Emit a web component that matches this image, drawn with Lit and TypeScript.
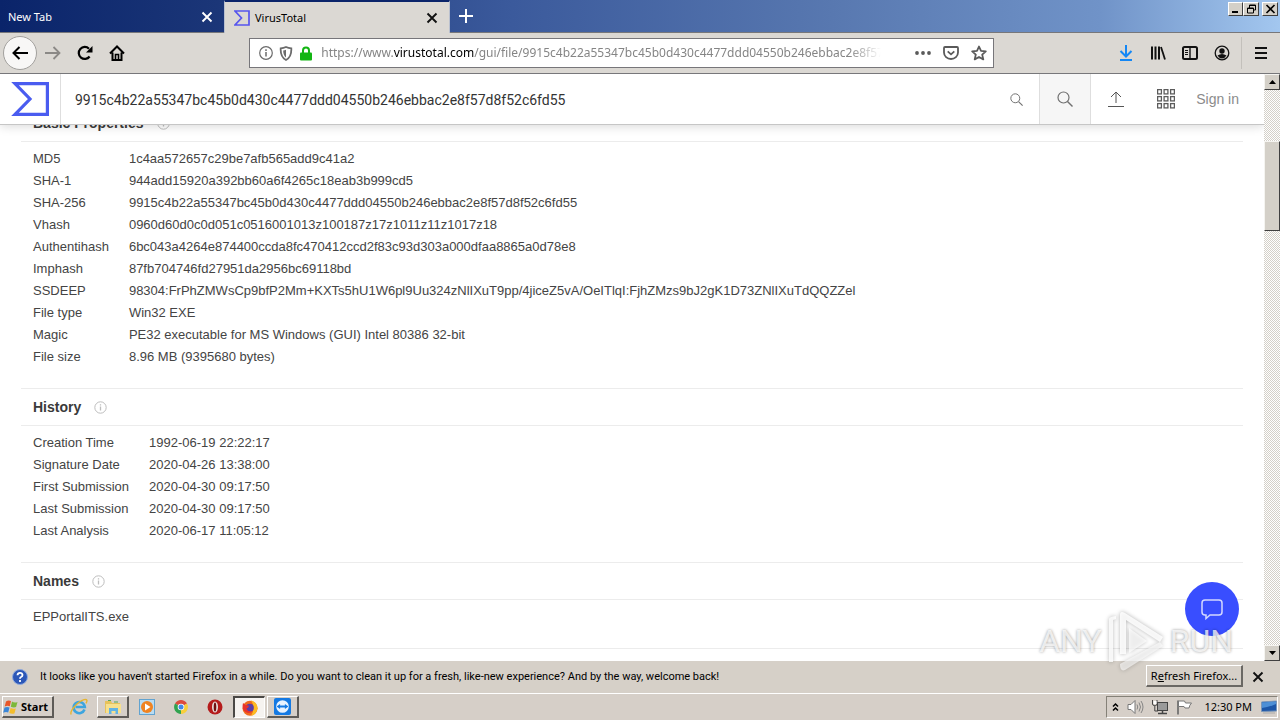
import { LitElement, html, css, svg } from "lit";
import { customElement } from "lit/decorators.js";

type Row = [string, string];

const BASIC: Row[] = [
  ["MD5", "1c4aa572657c29be7afb565add9c41a2"],
  ["SHA-1", "944add15920a392bb60a6f4265c18eab3b999cd5"],
  ["SHA-256", "9915c4b22a55347bc45b0d430c4477ddd04550b246ebbac2e8f57d8f52c6fd55"],
  ["Vhash", "0960d60d0c0d051c0516001013z100187z17z1011z11z1017z18"],
  ["Authentihash", "6bc043a4264e874400ccda8fc470412ccd2f83c93d303a000dfaa8865a0d78e8"],
  ["Imphash", "87fb704746fd27951da2956bc69118bd"],
  ["SSDEEP", "98304:FrPhZMWsCp9bfP2Mm+KXTs5hU1W6pl9Uu324zNlIXuT9pp/4jiceZ5vA/OeITlqI:FjhZMzs9bJ2gK1D73ZNlIXuTdQQZZel"],
  ["File type", "Win32 EXE"],
  ["Magic", "PE32 executable for MS Windows (GUI) Intel 80386 32-bit"],
  ["File size", "8.96 MB (9395680 bytes)"],
];

const HISTORY: Row[] = [
  ["Creation Time", "1992-06-19 22:22:17"],
  ["Signature Date", "2020-04-26 13:38:00"],
  ["First Submission", "2020-04-30 09:17:50"],
  ["Last Submission", "2020-04-30 09:17:50"],
  ["Last Analysis", "2020-06-17 11:05:12"],
];

const icon = (w: number, h: number, body: unknown) =>
  html`<svg width=${w} height=${h} viewBox="0 0 ${w} ${h}" fill="none" aria-hidden="true">${body}</svg>`;

const cross = (color: string) =>
  icon(12, 12, svg`<path d="M1.5 1.5l9 9M10.5 1.5l-9 9" stroke=${color} stroke-width="1.9"/>`);

const info = icon(13, 13, svg`<circle cx="6.5" cy="6.5" r="5.7" stroke="#bdbdbd"/><path d="M6.5 5.6v4M6.5 3.2v1.3" stroke="#bdbdbd" stroke-width="1.3"/>`);

const magnifier = (n: number) =>
  html`<svg width=${n} height=${n} viewBox="0 0 16 16" fill="none" aria-hidden="true"><circle cx="6.5" cy="6.5" r="5.5" stroke="#707070" stroke-width="1.2"/><path d="M10.5 10.5l5 5" stroke="#707070" stroke-width="1.400"/></svg>`;

@customElement("browser-tabs")
export class BrowserTabs extends LitElement {
  static styles = css`
    :host { display: flex; height: 33px; box-sizing: border-box; border-bottom: 1px solid #77777a; font: 11px/16px "Noto Sans", sans-serif;
      background: linear-gradient(90deg, #0a246a 0%, #1b3678 17%, #3b5a9c 40%, #5878b0 65%, #7093c8 86%, #a3c7ef 100%); }
    button { border: 0; padding: 0; background: none; display: grid; place-items: center; font: inherit; }
    .tab { display: flex; align-items: center; width: 224px; box-sizing: border-box; padding: 2px 11px 0 8px; color: #fff; }
    .active { background: #dbd8d3; color: #000; width: 226px; margin-bottom: -1px; border: solid #b9c0cf; border-width: 2px 1px 0; border-top-color: #0a246a; padding: 0 11px 0 9px; }
    .name { flex: 1; }
    .fav { display: flex; margin-right: 5px; }
    .add { width: 32px; }
    .win { display: flex; margin: 2px 2px 0 auto; }
    .win button { width: 15px; height: 14px; background: #d4d0c8; border: 1px solid; border-color: #fff #404040 #404040 #fff; }
    .win .close { margin-left: 3px; width: 16px; }
    .win .restore { width: 16px; }
  `;
  render() {
    return html`
      <div class="tab"><span class="name">New Tab</span><button aria-label="Close New Tab">${cross("#fff")}</button></div>
      <div class="tab active">
        <span class="fav">${icon(16, 16, svg`<path d="M1 1h14v14H1l6.5-7z" stroke="#5755ee" stroke-width="1.7"/>`)}</span>
        <span class="name">VirusTotal</span><button aria-label="Close VirusTotal">${cross("#111")}</button>
      </div>
      <button class="add" aria-label="New tab">${icon(14, 14, svg`<path d="M7 0v14M0 7h14" stroke="#fff" stroke-width="2"/>`)}</button>
      <div class="win">
        <button aria-label="Minimize">${icon(11, 10, svg`<path d="M2 8h6" stroke="#000" stroke-width="2"/>`)}</button>
        <button class="restore" aria-label="Restore">${icon(11, 10, svg`<path d="M3.5 4V1h6v5h-2M1.5 4h6v5h-6z" stroke="#000"/><path d="M3 1.5h7M1 4.5h7" stroke="#000"/>`)}</button>
        <button class="close" aria-label="Close">${icon(11, 10, svg`<path d="M1.5 1l8 8M9.5 1l-8 8" stroke="#000" stroke-width="1.6"/>`)}</button>
      </div>`;
  }
}

@customElement("browser-toolbar")
export class BrowserToolbar extends LitElement {
  static styles = css`
    :host { display: flex; align-items: center; height: 41px; box-sizing: border-box; background: #dbd8d3; border-bottom: 1px solid #77777a; padding: 0 3px; font: 12px/18px "Noto Sans", sans-serif; }
    button { border: 0; padding: 0; background: none; width: 32px; height: 32px; display: grid; place-items: center; flex: none; }
    .back { width: 34px; height: 34px; box-sizing: border-box; border: 1px solid #a2a09d; border-radius: 50%; background: #f8f7f6; }
    .spring { flex: 3 1 0; }
    .url { display: flex; align-items: center; flex: 19 1 0; min-width: 0; height: 30px; box-sizing: border-box; background: #fff; border: 1px solid #77767a; padding: 0 0 0 6px; }
    .url button { width: 20px; height: 28px; }
    .url .act { width: 28px; }
    .address { flex: 1; min-width: 0; overflow: hidden; white-space: nowrap; color: #858585; margin: 0 28px 0 5px; outline: 0;
      -webkit-mask-image: linear-gradient(270deg, transparent, #000 32px); mask-image: linear-gradient(270deg, transparent, #000 32px); }
    .host { color: #000; }
    .sep { width: 1px; height: 32px; background: #c3c0bb; margin: 0 3px; }
  `;
  render() {
    return html`
      <button class="back" aria-label="Back">${icon(16, 14, svg`<path d="M16 7H1.5M7.5 1L1.5 7l6 6" stroke="#000" stroke-width="2"/>`)}</button>
      <button aria-label="Forward">${icon(16, 14, svg`<path d="M0 7h14.5M8.500 1l6 6-6 6" stroke="#8b8986" stroke-width="1.8"/>`)}</button>
      <button aria-label="Reload">${icon(16, 16, svg`<path d="M12.600 11.500A6 6 0 1 1 12 3.700" stroke="#000" stroke-width="2.200"/><path d="M15.500 1v6.500H9z" fill="#000"/>`)}</button>
      <button aria-label="Home">${icon(16, 16, svg`<path d="M1 8.500L8 1.500l7 7M3.500 7.500V15h9V7.500" stroke="#000" stroke-width="2"/><path d="M6.500 15V9.500h3V15" stroke="#000" stroke-width="1.600"/>`)}</button>
      <span class="spring"></span>
      <div class="url">
        <button aria-label="Site information">${icon(14, 14, svg`<circle cx="7" cy="7" r="6.300" stroke="#6b6b6b" stroke-width="1.200"/><path d="M7 6v4.500M7 3.300v1.600" stroke="#6b6b6b" stroke-width="1.500"/>`)}</button>
        <button aria-label="Tracking protection">${icon(14, 15, svg`<path d="M7 1c2 .9 3.700 1.200 5.300 1.300C12.600 8 11 12 7 14 3 12 1.400 8 1.700 2.300 3.300 2.200 5 1.900 7 1z" stroke="#6b6b6b" stroke-width="1.800"/><path d="M7 3.800v7.600C5 10 4.200 7.500 4.200 4.500 5.200 4.400 6.200 4.200 7 3.800z" fill="#6b6b6b"/>`)}</button>
        <button aria-label="Connection secure">${icon(12, 15, svg`<path d="M3 7V4.500a3 3 0 0 1 6 0V7" stroke="#12b512" stroke-width="2"/><rect y="6.500" width="12" height="8" rx="1" fill="#12b512"/>`)}</button>
        <div class="address" role="textbox" contenteditable="true" aria-label="Address">https://www.<span class="host">virustotal.com</span>/gui/file/9915c4b22a55347bc45b0d430c4477ddd04550b246ebbac2e8f57d8f52c6fd55</div>
        <button class="act" aria-label="Page actions">${icon(16, 4, svg`<circle cx="2" cy="2" r="1.900" fill="#5a5a5a"/><circle cx="8" cy="2" r="1.900" fill="#5a5a5a"/><circle cx="14" cy="2" r="1.900" fill="#5a5a5a"/>`)}</button>
        <button class="act" aria-label="Save to Pocket">${icon(16, 14, svg`<path d="M2 1h12q1 0 1 1v4.500a7 6.500 0 0 1-14 0V2q0-1 1-1z" stroke="#5a5a5a" stroke-width="1.800"/><path d="M4.700 5.300L8 8.300l3.300-3" stroke="#5a5a5a" stroke-width="1.800"/>`)}</button>
        <button class="act" aria-label="Bookmark">${icon(16, 16, svg`<path d="M8 1.500l2 4.400 4.800.5-3.600 3.200 1.100 4.800L8 12l-4.300 2.400 1.100-4.800L1.200 6.400 6 5.900z" stroke="#5a5a5a" stroke-width="1.800" stroke-linejoin="round"/>`)}</button>
      </div>
      <span class="spring"></span>
      <button aria-label="Downloads">${icon(14, 16, svg`<path d="M7 0v11M1.500 6L7 11.500 12.500 6" stroke="#1487f5" stroke-width="2"/><path d="M1 15h12" stroke="#1487f5" stroke-width="2"/>`)}</button>
      <button aria-label="Library">${icon(16, 14, svg`<path d="M2 .5v13M5.500 .5v13M9 .5v13" stroke="#111" stroke-width="2"/><path d="M11 1l4 12.500" stroke="#111" stroke-width="1.800"/>`)}</button>
      <button aria-label="Sidebars">${icon(16, 14, svg`<rect x="1" y="1" width="14" height="12" rx="1.500" stroke="#111" stroke-width="2"/><path d="M8 1v12" stroke="#111" stroke-width="1.400"/><path d="M3 4.500h3M3 6.500h3M3 8.500h3" stroke="#111"/>`)}</button>
      <button aria-label="Account">${icon(16, 16, svg`<circle cx="8" cy="8" r="6.800" stroke="#111" stroke-width="1.300"/><circle cx="8" cy="6" r="2.700" fill="#111"/><path d="M3.500 10.500q4.500-3 9 0-1.800 3-4.500 3t-4.500-3z" fill="#111"/>`)}</button>
      <span class="sep"></span>
      <button aria-label="Menu">${icon(12, 12, svg`<path d="M0 1h12M0 6h12M0 11h12" stroke="#111" stroke-width="2"/>`)}</button>`;
  }
}

@customElement("site-header")
export class SiteHeader extends LitElement {
  static styles = css`
    :host { display: flex; align-items: stretch; height: 51px; box-sizing: border-box; background: #fff; border-bottom: 1px solid #c6c6c6; box-shadow: 0 1px 10px rgba(0, 0, 0, .16); position: relative; z-index: 1; font: 14px/20px "Liberation Sans", Arial, sans-serif; }
    button, a { border: 0; background: none; padding: 0; display: grid; place-items: center; flex: none; }
    .logo { width: 60px; border-right: 1px solid #dedede; }
    input { flex: 1; min-width: 0; border: 0; outline: 0; padding: 2px 14px 0; background: none; color: #333; font: 14px/20px Roboto, sans-serif; }
    .clear { width: 46px; }
    .go { width: 52px; box-sizing: border-box; border: solid #dedede; border-width: 0 1px; background: #f6f6f6; }
    .up { width: 50px; }
    .apps { width: 50px; }
    .sign { color: #8b8b8b; text-decoration: none; padding: 0 25px 0 5px; }
  `;
  render() {
    return html`
      <a class="logo" href="#" aria-label="VirusTotal">${icon(38, 34, svg`<path d="M4 1.600h32.400v30.800H4L19 17z" stroke="#4a5cf0" stroke-width="3.200"/>`)}</a>
      <input aria-label="Search" value="9915c4b22a55347bc45b0d430c4477ddd04550b246ebbac2e8f57d8f52c6fd55" />
      <button class="clear" aria-label="Search in page">${magnifier(13)}</button>
      <button class="go" aria-label="Search">${magnifier(16)}</button>
      <button class="up" aria-label="Upload">${icon(16, 16, svg`<path d="M8 12V1.500M3 6l5-5 5 5M0 15.500h16" stroke="#555"/>`)}</button>
      <button class="apps" aria-label="Apps">${icon(18, 20, [0, 7, 14].map((y) => [0, 6.5, 13].map((x) => svg`<rect x=${x + 0.6} y=${y + 0.6} width="3.800" height="4.300" stroke="#5c5c5c" stroke-width="1.300"/>`)))}</button>
      <a class="sign" href="#">Sign in</a>`;
  }
}

@customElement("file-details")
export class FileDetails extends LitElement {
  static styles = css`
    :host { display: block; flex: 1; min-height: 0; overflow: hidden; background: #fff; color: #444; font: 13px/22px "Liberation Sans", Arial, sans-serif; }
    .list { margin: -20px 21px 0; }
    section { border-bottom: 1px solid #ececec; }
    h2 { display: flex; align-items: center; gap: 13px; margin: 0; height: 37px; box-sizing: border-box; padding: 0 12px; border-bottom: 1px solid #ececec; font-size: 14px; color: #3a3a3a; }
    h2 svg { flex: none; }
    .body { padding: 6px 12px 20px; }
    table { border-collapse: collapse; white-space: nowrap; }
    th, td { padding: 0; text-align: left; font-weight: normal; height: 22px; }
    th { padding-right: 20px; }
    ul { margin: 0; padding: 0; list-style: none; }
  `;
  private table(title: string, rows: Row[]) {
    return html`<section>
      <h2>${title}${info}</h2>
      <div class="body"><table><tbody>${rows.map(([k, v]) => html`<tr><th scope="row">${k}</th><td>${v}</td></tr>`)}</tbody></table></div>
    </section>`;
  }
  render() {
    return html`<div class="list">
      ${this.table("Basic Properties", BASIC)}
      ${this.table("History", HISTORY)}
      <section><h2>Names${info}</h2><div class="body"><ul><li>EPPortalITS.exe</li></ul></div></section>
    </div>`;
  }
}

@customElement("page-scrollbar")
export class PageScrollbar extends LitElement {
  static styles = css`
    :host { display: grid; grid-template-rows: 16px 51fr 90px 413fr 16px; width: 16px; background: repeating-conic-gradient(#fff 0 25%, #d4d0c8 0 50%) 0 0 / 2px 2px; }
    button, .thumb { padding: 0; border: 1px solid; border-color: #f5f4f0 #404040 #404040 #f5f4f0; background: #d4d0c8; display: grid; place-items: center; }
    .thumb { grid-row: 3; }
    .down { grid-row: 5; }
  `;
  render() {
    return html`
      <button aria-label="Scroll up">${icon(7, 4, svg`<path d="M0 4L3.500 0 7 4z" fill="#000"/>`)}</button>
      <div class="thumb"></div>
      <button class="down" aria-label="Scroll down">${icon(7, 4, svg`<path d="M0 0l3.500 4L7 0z" fill="#000"/>`)}</button>`;
  }
}

@customElement("notice-bar")
export class NoticeBar extends LitElement {
  static styles = css`
    :host { display: flex; align-items: center; height: 32px; background: #d6d0c8; padding: 0 16px 0 12px; font: 11px/16px "Noto Sans", sans-serif; color: #000; }
    .help { display: flex; margin-right: 12px; }
    p { flex: 1; margin: 0; white-space: nowrap; font-family: Roboto, sans-serif; }
    button { padding: 0; border: 0; background: none; font: inherit; color: inherit; white-space: nowrap; }
    .refresh { height: 22px; width: 97px; margin: 0 9px 2px 0; border: solid; border-width: 1px 2px 2px 1px; border-color: #fff #6b6864 #6b6864 #fff; }
    .x { width: 12px; display: grid; }
  `;
  render() {
    return html`
      <span class="help">${icon(16, 16, svg`<circle cx="8" cy="8" r="7.500" fill="#2c57b8" stroke="#8fa9dc"/><path d="M5.500 6.200Q5.700 3.800 8 3.800t2.500 2.100Q10.500 7.200 9 8q-1 .5-1 1.800M8 11v2" stroke="#fff" stroke-width="1.800"/>`)}</span>
      <p>It looks like you haven't started Firefox in a while. Do you want to clean it up for a fresh, like-new experience? And by the way, welcome back!</p>
      <button class="refresh">R<u>e</u>fresh Firefox...</button>
      <button class="x" aria-label="Dismiss">${cross("#111")}</button>`;
  }
}

@customElement("task-bar")
export class TaskBar extends LitElement {
  static styles = css`
    :host { display: flex; align-items: center; height: 27px; box-sizing: border-box; border-top: 1px solid #fff; background: #d6cfc8; padding: 0 2px; font: 11px/16px "Noto Sans", sans-serif; color: #000; }
    button { padding: 0; border: 0; background: none; width: 32px; height: 22px; box-sizing: border-box; display: grid; place-items: center; margin-right: 2px; }
    .start { display: flex; align-items: center; gap: 2px; width: 52px; margin-right: 9px; font: bold 11px/16px "Noto Sans", sans-serif; }
    .raised { border: solid; border-width: 1px 2px 2px 1px; border-color: #fff #5e5b57 #5e5b57 #fff; }
    .pressed { border: solid; border-width: 2px 1px 1px 2px; border-color: #4a4845 #fff #fff #4a4845; background: #f6f3f0; }
    .tray { margin-left: auto; display: flex; align-items: center; gap: 8px; height: 22px; box-sizing: border-box; border: 1px solid; border-color: #858178 #fff #fff #858178; padding: 0 0 0 5px; }
    .tray svg { flex: none; }
    .clock { margin: 0 1px 0 3px; white-space: nowrap; }
  `;
  render() {
    return html`
      <button class="start raised">
        ${icon(16, 16, svg`<path d="M3 2.500Q5.500.8 8 2L6.800 7.300Q4.500 6.200 1.700 7.500z" fill="#e8572a"/><path d="M9 2.500q2.500 1.600 5.500.4l-1.400 5.200q-2.500 1-5.300-.4z" fill="#7cb83a"/><path d="M1.500 8.500q2.700-1.200 5 0l-1.300 5Q3 12.400.2 13.700z" fill="#3a86d8"/><path d="M7.600 9q2.600 1.400 5.200.4l-1.400 5q-2.700 1-5.100-.4z" fill="#f4bd2c"/>`)}
        <span>Start</span>
      </button>
      <button aria-label="Internet Explorer">${icon(18, 18, svg`<path d="M14.500 11.500A5.600 5.600 0 1 1 14.800 9H5.500" stroke="#3da5df" stroke-width="2.600"/><path d="M1.200 16.500C-.8 13 8 3.500 14 1.700c3.500-1 3.500 1.300 2 3.600" stroke="#e6b530" stroke-width="1.400"/>`)}</button>
      <button class="raised" aria-label="Explorer">${icon(18, 16, svg`<path d="M1 2h6l1 2h8v10H1z" fill="#e7c25a"/><path d="M2 5h15v9H2z" fill="#f7e08d"/><path d="M5 15V9h9v6h-2.500v-3h-4v3z" fill="#62b3e4"/><path d="M4 1.500h3M10 3h4" stroke="#54a957"/>`)}</button>
      <button aria-label="Media Player">${icon(16, 16, svg`<rect x=".5" y=".5" width="15" height="15" fill="#b9dcf2" stroke="#62a3d0"/><circle cx="8" cy="8" r="6" fill="#f08321"/><path d="M6 4.500L11.500 8 6 11.500z" fill="#fff"/>`)}</button>
      <button aria-label="Chrome">${icon(14, 14, svg`<path d="M7 7L1 3.500A7 7 0 0 1 13 3.500z" fill="#dd4b3e"/><path d="M7 7L1 3.500A7 7 0 0 0 7 14z" fill="#31a350"/><path d="M7 7h0L13 3.500A7 7 0 0 1 7 14z" fill="#f8cf3c"/><circle cx="7" cy="7" r="3.300" fill="#fff"/><circle cx="7" cy="7" r="2.500" fill="#4489e8"/>`)}</button>
      <button aria-label="Opera">${icon(16, 16, svg`<circle cx="8" cy="8" r="7.500" fill="#b51b1b"/><ellipse cx="8" cy="8" rx="3" ry="5.500" fill="#e8e2df"/><ellipse cx="8" cy="8" rx="1.300" ry="4.600" fill="#701010"/>`)}</button>
      <button class="pressed" aria-label="Firefox">${icon(16, 16, svg`<circle cx="8" cy="8.300" r="7.500" fill="#f06a1c"/><path d="M9 .3q7 2.500 6.500 8.500-1 6-6.500 7Q14 8 9 .3z" fill="#fdbb22"/><circle cx="7.800" cy="7.700" r="4" fill="#5a3eaa"/><path d="M1 3q2 2.500 6 2.700Q6.500 8 4.500 8.500q1 3.500 6 2.800-3 3-7 .7T1 3z" fill="#e8332c"/>`)}</button>
      <button class="raised" aria-label="TeamViewer">${icon(17, 17, svg`<rect width="17" height="17" rx="2" fill="#1479e3"/><circle cx="8.500" cy="8.500" r="6.300" fill="#e9f3ff"/><path d="M2.600 8.500l3.500-2.600v1.600h4.800V5.900l3.500 2.600-3.500 2.600V9.500H6.100v1.600z" fill="#1479e3"/>`)}</button>
      <div class="tray">
        ${icon(7, 10, svg`<path d="M1 4.500L3.500 2 6 4.500M1 8.500L3.500 6 6 8.500" stroke="#000" stroke-width="1.500"/>`)}
        ${icon(17, 16, svg`<path d="M1 5.500h3L8 1.500v13l-4-4H1z" fill="#fff" stroke="#777"/><path d="M10 5.500q1.500 2.500 0 5M12 3.500q3 4.500 0 9M14 2q4 6 0 12" stroke="#858585"/>`)}
        ${icon(16, 16, svg`<rect x="5.500" y="3.500" width="10" height="8" fill="#9a9a9a" stroke="#444"/><path d="M6 14.500h9M10.500 12v2" stroke="#444" stroke-width="1.500"/><path d="M.5 1v4q0 1.500 2 1.500h1Q5 6.500 5 5V1M2.800 6.500V12H6" stroke="#444"/><path d="M1.500 2h3v3h-3z" fill="#fff"/>`)}
        ${icon(17, 16, svg`<path d="M2 1.500v14" stroke="#666" stroke-width="1.600"/><path d="M2.500 2h6l1 2h6q-2 2-2.500 5H9L8 7.500H2.500z" fill="#fff" stroke="#777"/>`)}
        <span class="clock">12:30 PM</span>
        ${icon(16, 14, svg`<path d="M.5 2L15.500 1v10l-15 .5z" fill="#1c56a8" stroke="#7b96b8"/><path d="M1 2.500l14-1V4Q8 7 1 8z" fill="#4d8fd6"/><path d="M2 13h12" stroke="#aaa"/>`)}
      </div>`;
  }
}

@customElement("app-root")
export class AppRoot extends LitElement {
  static styles = css`
    :host { display: flex; flex-direction: column; height: 100vh; overflow: hidden; position: relative; background: #fff; }
    .view { flex: 1; min-height: 0; display: flex; }
    .page { flex: 1; min-width: 0; display: flex; flex-direction: column; position: relative; overflow: hidden; }
    .chat { position: absolute; right: 25px; bottom: 25px; width: 54px; height: 54px; border: 0; border-radius: 50%; background: #394eff; display: grid; place-items: center; padding: 0; z-index: 2; }
    .mark { position: absolute; right: 47px; bottom: 48px; z-index: 3; display: flex; align-items: center; gap: 5px; color: rgba(255, 255, 255, .75); font: 32px/62px Roboto, sans-serif; text-shadow: 0 0 3px rgba(0, 0, 0, .4); pointer-events: none; }
    .mark svg { filter: drop-shadow(0 0 2px rgba(0, 0, 0, .35)); }
  `;
  render() {
    return html`
      <browser-tabs></browser-tabs>
      <browser-toolbar></browser-toolbar>
      <div class="view">
        <div class="page">
          <site-header></site-header>
          <file-details></file-details>
          <button class="chat" aria-label="Chat">${icon(24, 22, svg`<path d="M5 2h14q3 0 3 3v9q0 3-3 3H10l-4 3.500V17H5q-3 0-3-3V5q0-3 3-3z" stroke="#d3d8ff" stroke-width="1.500"/>`)}</button>
        </div>
        <page-scrollbar></page-scrollbar>
      </div>
      <notice-bar></notice-bar>
      <task-bar></task-bar>
      <div class="mark">
        <span>ANY</span>
        ${icon(58, 62, svg`<path d="M2 52V9q0-2 7-3v3l-3 1v42z" fill="#fff" fill-opacity=".8"/><path d="M13 44V5q0-5 5-2l38 24-3 5L19 10v34z" fill="#fff" fill-opacity=".85"/><path d="M22 18l18 13-18 12z" fill="#fff" fill-opacity=".7"/><path d="M13 54l40-22 3 4-38 24q-5 2-5-6z" fill="#fff" fill-opacity=".6"/>`)}
        <span>RUN</span>
      </div>`;
  }
}
